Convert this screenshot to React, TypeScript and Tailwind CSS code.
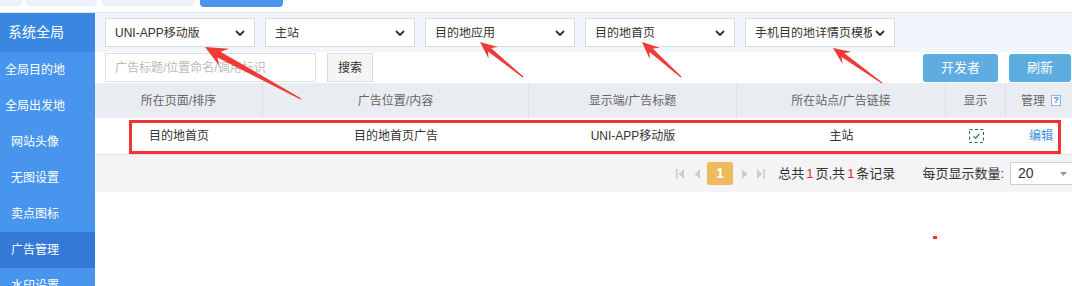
import React from "react";

const FONT = "font-['Liberation_Sans','Noto_Sans_CJK_SC',sans-serif]";

const sideItems = ["全局目的地", "全局出发地", "网站头像", "无图设置", "卖点图标", "广告管理", "水印设置"];

const selects = ["UNI-APP移动版", "主站", "目的地应用", "目的地首页", "手机目的地详情页模板"];

// tail x,y -> tip x,y, head length, head width, shaft half width at neck
function arrowPoints(tx: number, ty: number, hx: number, hy: number, L: number, W: number, s: number) {
  const dx = hx - tx;
  const dy = hy - ty;
  const len = Math.sqrt(dx * dx + dy * dy);
  const ux = dx / len;
  const uy = dy / len;
  const nx = -uy;
  const ny = ux;
  const bx = hx - ux * L;
  const by = hy - uy * L;
  const kx = hx - ux * L * 0.72;
  const ky = hy - uy * L * 0.72;
  const pts = [
    [tx + nx * 0.6, ty + ny * 0.6],
    [kx + nx * s, ky + ny * s],
    [bx + (nx * W) / 2, by + (ny * W) / 2],
    [hx, hy],
    [bx - (nx * W) / 2, by - (ny * W) / 2],
    [kx - nx * s, ky - ny * s],
    [tx - nx * 0.6, ty - ny * 0.6],
  ];
  return pts.map((p) => `${p[0].toFixed(1)},${p[1].toFixed(1)}`).join(" ");
}

const arrows = [
  { t: [301, 99], h: [205, 47], L: 22, W: 20, s: 3.2 },
  { t: [523, 77], h: [480, 42], L: 17, W: 15, s: 2.4 },
  { t: [681, 77], h: [642, 42], L: 17, W: 15, s: 2.4 },
  { t: [882, 83], h: [833, 48], L: 17, W: 15, s: 2.4 },
];

function Chevron() {
  return (
    <svg width="10" height="6" viewBox="0 0 10 6" className="shrink-0">
      <path d="M1 1 L5 5 L9 1" fill="none" stroke="#333" strokeWidth="2" />
    </svg>
  );
}

function DropSelect({ label }: { label: string }) {
  return (
    <div className="flex items-center w-[150px] h-[29px] bg-white border border-[#d9dde3] pl-[9px] pr-[9px]">
      <span className="flex-1 overflow-hidden whitespace-nowrap text-[12px] text-[#333] leading-none">{label}</span>
      <span className="ml-[3px]">
        <Chevron />
      </span>
    </div>
  );
}

function PageIcon({ kind }: { kind: "first" | "prev" | "next" | "last" }) {
  return (
    <svg width="8" height="10" viewBox="0 0 8 10">
      {kind === "first" && (
        <>
          <rect x="0" y="0" width="1.6" height="10" fill="#cdcdcd" />
          <path d="M8 0 L2.5 5 L8 10 Z" fill="#cdcdcd" />
        </>
      )}
      {kind === "prev" && <path d="M7 0 L1.5 5 L7 10 Z" fill="#cdcdcd" />}
      {kind === "next" && <path d="M1 0 L6.5 5 L1 10 Z" fill="#cdcdcd" />}
      {kind === "last" && (
        <>
          <path d="M0 0 L5.5 5 L0 10 Z" fill="#cdcdcd" />
          <rect x="6.4" y="0" width="1.6" height="10" fill="#cdcdcd" />
        </>
      )}
    </svg>
  );
}

export default function App() {
  const cols = "grid grid-cols-[168px_266px_208px_209px_60px_66px]";
  return (
    <div className={`relative w-[1072px] h-[286px] overflow-hidden bg-white ${FONT}`}>
      {/* top tab strip */}
      <div className="h-[13px] border-b border-[#dfe4ec] flex items-start">
        <div className="w-[22px] h-[6px] bg-[#edf1f9] rounded-br-[4px]" />
        <div className="w-[71px] h-[6px] ml-[4px] bg-[#edf1f9] rounded-b-[4px]" />
        <div className="w-[94px] h-[6px] ml-[4px] bg-[#edf1f9] rounded-b-[4px]" />
        <div className="w-[83px] h-[7px] ml-[5px] bg-[#4a96ee] rounded-b-[4px]" />
      </div>

      <div className="flex h-[273px]">
        {/* sidebar */}
        <div className="w-[95px] shrink-0 bg-[#4895ee] flex flex-col overflow-hidden">
          <div className="h-[39px] shrink-0 bg-[#3a87e2] flex items-center">
            <span className="w-[72px] text-center text-white text-[14px]">系统全局</span>
          </div>
          {sideItems.map((s) => (
            <div
              key={s}
              className={`h-[36px] shrink-0 flex items-center ${s === "广告管理" ? "bg-[#3379d5]" : ""}`}
            >
              <span className="w-[70px] text-center text-white text-[12px]">{s}</span>
            </div>
          ))}
        </div>

        {/* main */}
        <div className="flex-1 flex flex-col">
          <div className="h-[39px] shrink-0 bg-[#f1f6fc] flex items-center gap-[10px] pl-[10px]">
            {selects.map((s) => (
              <DropSelect key={s} label={s} />
            ))}
          </div>

          <div className="h-[31px] shrink-0 flex items-center pl-[10px] pr-[1px]">
            <div className="w-[211px] h-[29px] border border-[#dcdfe4] flex items-center pl-[9px] text-[12px] text-[#bbb] whitespace-nowrap overflow-hidden">
              广告标题/位置命名/调用标识
            </div>
            <div className="ml-[11px] w-[46px] h-[29px] bg-[#f5f5f5] border border-[#dcdcdc] flex items-center justify-center text-[12px] text-[#333]">
              搜索
            </div>
            <div className="ml-auto w-[75px] h-[28px] rounded-[3px] bg-[#5eade1] text-white text-[13px] flex items-center justify-center">
              开发者
            </div>
            <div className="ml-[11px] w-[62px] h-[28px] rounded-[3px] bg-[#5eade1] text-white text-[13px] flex items-center justify-center">
              刷新
            </div>
          </div>

          {/* table */}
          <div className={`${cols} h-[35px] shrink-0 bg-[#e9ecf0] text-[12px] text-[#666]`}>
            {["所在页面/排序", "广告位置/内容", "显示端/广告标题", "所在站点/广告链接", "显示"].map((h) => (
              <div key={h} className="flex items-center justify-center border-r border-[#dde1e7]">
                {h}
              </div>
            ))}
            <div className="flex items-center justify-center gap-[6px] pl-[4px]">
              <span>管理</span>
              <span className="w-[10px] h-[11px] border border-[#8fb3dc] bg-white text-[#2f86de] text-[9px] font-bold leading-[9px] flex items-center justify-center">
                ?
              </span>
            </div>
          </div>

          <div className={`${cols} h-[37px] shrink-0 border-b border-[#e3e6eb] text-[12px] text-[#333]`}>
            <div className="flex items-center justify-center">目的地首页</div>
            <div className="flex items-center justify-center">目的地首页广告</div>
            <div className="flex items-center justify-center">UNI-APP移动版</div>
            <div className="flex items-center justify-center">主站</div>
            <div className="flex items-center justify-center">
              <svg width="15" height="14" viewBox="0 0 15 14">
                <rect x="0.5" y="0.5" width="14" height="13" fill="none" stroke="#2f6b3c" strokeDasharray="3 2.5" />
                <path d="M4.5 7.2 L6.6 9.2 L10.5 5" fill="none" stroke="#3f9150" strokeWidth="1.4" />
              </svg>
            </div>
            <div className="flex items-center justify-center pl-[4px] text-[#3d8fe0]">编辑</div>
          </div>

          {/* pagination */}
          <div className="h-[37px] shrink-0 bg-[#f4f4f7] flex items-center justify-end">
            <PageIcon kind="first" />
            <span className="ml-[9px]">
              <PageIcon kind="prev" />
            </span>
            <div className="ml-[6px] w-[26px] h-[23px] rounded-[2px] bg-[#f0ba5c] text-white text-[14px] font-bold flex items-center justify-center">
              1
            </div>
            <span className="ml-[8px]">
              <PageIcon kind="next" />
            </span>
            <span className="ml-[8px]">
              <PageIcon kind="last" />
            </span>
            <div className="ml-[13px] text-[13px] text-[#333] whitespace-nowrap">
              总共<span className="text-[#e02b2b] mx-[2px]">1</span>页,共<span className="text-[#e02b2b] mx-[2px]">1</span>条记录
            </div>
            <div className="ml-[27px] text-[13px] text-[#333] whitespace-nowrap">每页显示数量:</div>
            <div className="ml-[6px] w-[62px] h-[23px] bg-white border border-[#cfcfcf] border-r-0 flex items-center pl-[7px] text-[14px] text-[#333]">
              <span className="flex-1">20</span>
              <svg width="7" height="4" viewBox="0 0 7 4" className="mr-[5px]">
                <path d="M0 0 L7 0 L3.5 4 Z" fill="#999" />
              </svg>
            </div>
          </div>
        </div>
      </div>

      {/* red annotation box */}
      <div className="absolute left-[129px] top-[120px] w-[932px] h-[34px] border-[3px] border-[#f03434] pointer-events-none" />

      {/* annotation arrows */}
      <svg className="absolute left-0 top-0 pointer-events-none" width="1072" height="286" viewBox="0 0 1072 286">
        {arrows.map((a, i) => (
          <polygon key={i} points={arrowPoints(a.t[0], a.t[1], a.h[0], a.h[1], a.L, a.W, a.s)} fill="#f03a35" />
        ))}
      </svg>

      <div className="absolute left-[933px] top-[236px] w-[4px] h-[3px] bg-[#f03434]" />
    </div>
  );
}
